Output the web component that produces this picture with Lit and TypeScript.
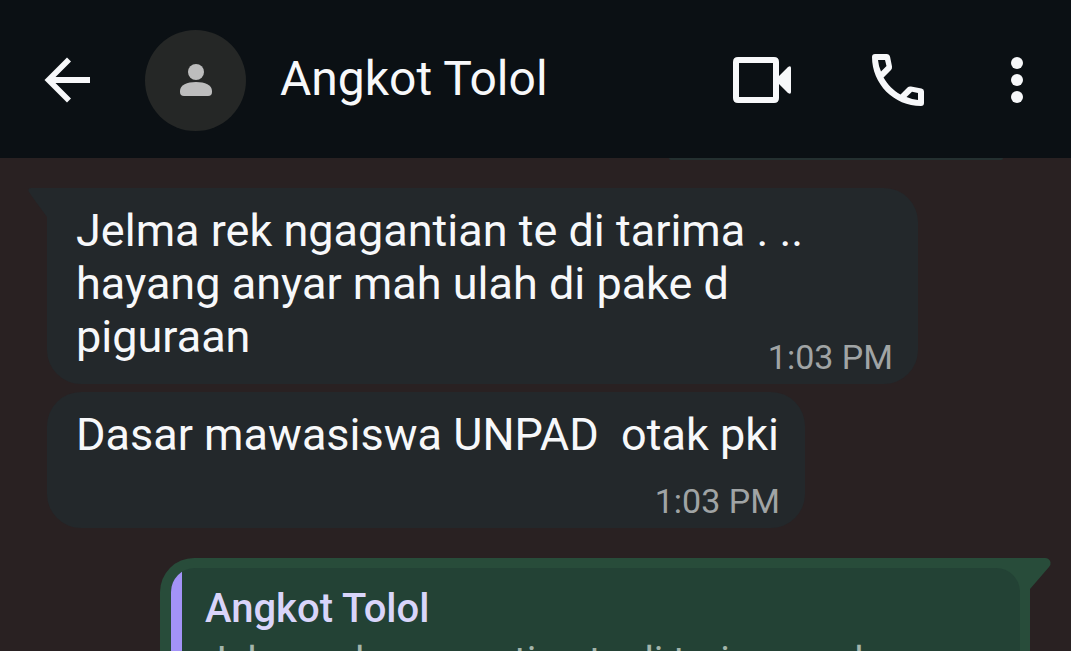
import { LitElement, html, css, nothing } from "lit";
import { customElement, property } from "lit/decorators.js";

@customElement("chat-header")
class ChatHeader extends LitElement {
  @property() name = "";

  static styles = css`
    :host {
      display: flex;
      align-items: center;
      box-sizing: border-box;
      flex: none;
      height: 158px;
      padding: 2px 42px 0 44px;
      background: #0b1014;
      color: #f7f8fa;
    }
    button {
      display: flex;
      flex: none;
      padding: 0;
      border: 0;
      background: none;
      color: inherit;
      cursor: pointer;
    }
    svg {
      display: block;
      fill: currentColor;
    }
    .avatar {
      display: flex;
      flex: none;
      align-items: center;
      justify-content: center;
      width: 101px;
      height: 101px;
      margin-left: 55px;
      border-radius: 50%;
      background: #252726;
      color: #bdbdbd;
    }
    .name {
      flex: 1;
      min-width: 0;
      margin: 0 0 0 34px;
      padding-bottom: 2px;
      font-size: 48px;
      line-height: 56px;
      font-weight: 400;
      white-space: nowrap;
      overflow: hidden;
      text-overflow: ellipsis;
    }
    .actions {
      display: flex;
      align-items: center;
      gap: 81px;
    }
  `;

  render() {
    return html`
      <button aria-label="Back">
        <svg width="46" height="46" viewBox="0 0 46 46">
          <path d="M23 .5 27 4.500 11.500 20H46v6H11.500L27 41.500 23 45.500.5 23z" />
        </svg>
      </button>
      <div class="avatar">
        <svg width="32" height="32" viewBox="0 0 32 32">
          <circle cx="16" cy="8" r="8" />
          <path d="M0 27c0-6 7-9 16-9s16 3 16 9v1q0 4-4 4H4q-4 0-4-4z" />
        </svg>
      </div>
      <h1 class="name">${this.name}</h1>
      <div class="actions">
        <button aria-label="Video call">
          <svg width="58" height="46" viewBox="0 0 58 46">
            <path
              fill-rule="evenodd"
              d="M5 0h36q5 0 5 5v14l9-9q3-2 3 1v24q0 3-3 1l-9-9v14q0 5-5 5H5q-5 0-5-5V5q0-5 5-5zM6 6v34h34V6z"
            />
          </svg>
        </button>
        <button aria-label="Voice call">
          <svg width="52" height="52" viewBox="0 0 52 52">
            <path
              fill-rule="evenodd"
              d="M3 0h12q2.500 0 3 2.500l2 10q.3 2-1 3.500l-7.500 7.500c4 7 10 13 17 17l7-7q1.500-1.500 3.500-1l10.500 2q2.500.5 2.500 3V49q0 3-3 3C22 52 0 30 0 3q0-3 3-3zM6 6q.5 6 3 11.500l5.500-5.500L13 6zM34.500 43q5.500 2.500 11.500 3v-7l-6-1.200z"
            />
          </svg>
        </button>
        <button aria-label="More options">
          <svg width="24" height="46" viewBox="0 0 24 46">
            <circle cx="12" cy="6" r="6" />
            <circle cx="12" cy="23" r="6" />
            <circle cx="12" cy="40" r="6" />
          </svg>
        </button>
      </div>
    `;
  }
}

@customElement("chat-message")
class ChatMessage extends LitElement {
  @property() text = "";
  @property() time = "";
  @property({ type: Boolean }) tail = false;
  @property({ type: Boolean, reflect: true }) inline = false;

  static styles = css`
    :host {
      display: block;
      position: relative;
      box-sizing: border-box;
      width: fit-content;
      max-width: calc(100% - 112px);
      border-radius: 34px;
      background: #23282b;
    }
    .bubble {
      display: grid;
      padding: 16px 25px 7px 29px;
    }
    .text {
      margin: 0;
      padding: 0 1px 14px 0;
      font-size: 45px;
      line-height: 53px;
      color: #f7f8fa;
      white-space: pre-wrap;
    }
    .time {
      justify-self: end;
      margin-top: 6px;
      font-size: 34px;
      line-height: 40px;
      color: #a0a4a5;
    }
    :host([inline]) .text,
    :host([inline]) .time {
      grid-area: 1 / 1;
    }
    :host([inline]) .time {
      align-self: end;
      margin: 0;
    }
    .tail {
      position: absolute;
      top: 0;
      left: -19px;
      fill: #23282b;
    }
  `;

  render() {
    return html`
      ${this.tail
        ? html`<svg class="tail" width="60" height="34" viewBox="0 0 60 34">
            <path d="M60 0H3Q-1 0 1 4Q2 6 19 29V34H60z" />
          </svg>`
        : nothing}
      <div class="bubble">
        <p class="text">${this.text}</p>
        <time class="time">${this.time}</time>
      </div>
    `;
  }
}

@customElement("chat-reply")
class ChatReply extends LitElement {
  @property() author = "";
  @property() quote = "";

  static styles = css`
    :host {
      display: block;
      position: relative;
      box-sizing: border-box;
      padding: 10px 10px 30px 11px;
      border-radius: 34px 0 34px 34px;
      background: #284c3a;
    }
    .tail {
      position: absolute;
      top: 0;
      left: 100%;
      fill: #284c3a;
    }
    .quote {
      display: flex;
      margin: 0;
      overflow: hidden;
      border-radius: 24px;
      background: #234235;
    }
    .bar {
      flex: none;
      width: 11px;
      background: #a393f7;
    }
    .content {
      flex: 1;
      min-width: 0;
      padding: 18px 24px 20px 23px;
    }
    .author {
      font-size: 40px;
      line-height: 46px;
      font-weight: 500;
      color: #d9d5fa;
    }
    .body {
      margin: 0;
      padding-top: 6px;
      font-size: 39px;
      line-height: 46px;
      color: #a3b5ab;
      white-space: pre-wrap;
    }
  `;

  render() {
    return html`
      <svg class="tail" width="21" height="31" viewBox="0 0 21 31">
        <path d="M0 0H15Q19 0 20.500 4Q21 7 19 9L0 31z" />
      </svg>
      <blockquote class="quote">
        <div class="bar"></div>
        <div class="content">
          <div class="author">${this.author}</div>
          <p class="body">${this.quote}</p>
        </div>
      </blockquote>
    `;
  }
}

@customElement("app-root")
class AppRoot extends LitElement {
  static styles = css`
    :host {
      display: flex;
      flex-direction: column;
      height: 100vh;
      overflow: hidden;
      background: #292122;
      font-family: Roboto, "Noto Sans", sans-serif;
    }
    .thread {
      display: flex;
      flex-direction: column;
      flex: 1;
      min-height: 0;
      padding: 0 41px 0 47px;
    }
    .edge {
      flex: none;
      align-self: flex-end;
      width: 34%;
      height: 2px;
      margin: 0 27px 28px 0;
      border-radius: 0 0 34px 34px;
      background: #243030;
    }
    .thread chat-message,
    .thread chat-reply {
      flex: none;
    }
    .thread chat-message + chat-message {
      margin-top: 8px;
    }
    .thread chat-reply {
      margin-top: 30px;
      margin-left: 113px;
    }
  `;

  render() {
    const first =
      "Jelma rek ngagantian te di tarima . ..  hayang anyar mah ulah di pake d piguraan";
    return html`
      <chat-header name="Angkot Tolol"></chat-header>
      <main class="thread">
        <div class="edge"></div>
        <chat-message tail inline .text=${first} time="1:03 PM"></chat-message>
        <chat-message .text=${"Dasar mawasiswa UNPAD  otak pki"} time="1:03 PM"></chat-message>
        <chat-reply author="Angkot Tolol" .quote=${first}></chat-reply>
      </main>
    `;
  }
}
